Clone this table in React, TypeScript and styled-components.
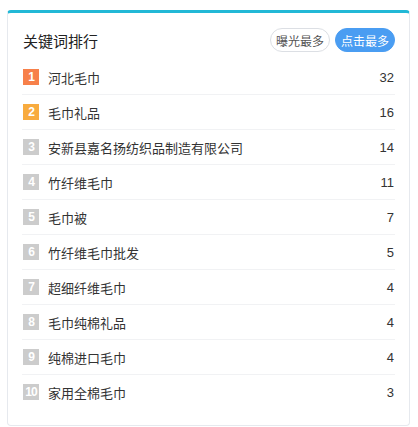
import React, { useState } from "react";
import styled, { createGlobalStyle } from "styled-components";

const Global = createGlobalStyle`
  html, body { margin: 0; padding: 0; background: #fff; }
  body { font-family: "Liberation Sans", Arial, "Noto Sans CJK SC", sans-serif; }
`;

const Page = styled.div`
  padding: 10px 8px 1px 7px;
  width: 418px;
  box-sizing: border-box;
`;

const Card = styled.div`
  border: 1px solid #e6e9ee;
  border-top: 3px solid #22b8d6;
  border-radius: 4px;
  padding: 14px 14px 20px 14px;
  box-sizing: border-box;
  height: 416px;
`;

const Header = styled.div`
  display: flex;
  align-items: center;
  justify-content: space-between;
  height: 26px;
  margin-bottom: 7px;
`;

const Title = styled.div`
  font-size: 15px;
  color: #222;
  padding-left: 1px;
`;

const Tabs = styled.div`
  display: flex;
  gap: 5px;
`;

const Tab = styled.button<{ $active: boolean }>`
  font-family: inherit;
  font-size: 12px;
  height: 24px;
  padding: 0 5px;
  border-radius: 12px;
  border: 1px solid ${(p) => (p.$active ? "#4a9df2" : "#dcdfe4")};
  background: ${(p) => (p.$active ? "#4a9df2" : "#fff")};
  color: ${(p) => (p.$active ? "#fff" : "#555")};
  cursor: pointer;
`;

const List = styled.div`
  display: flex;
  flex-direction: column;
`;

const Row = styled.div`
  display: flex;
  align-items: center;
  height: 35px;
  border-top: 1px solid #f1f2f4;
  box-sizing: border-box;
  &:first-child { border-top: none; height: 34px; }
  font-size: 13px;
  color: #333;
  padding-left: 1px;
`;

const Badge = styled.span<{ $bg: string }>`
  width: 16px;
  height: 16px;
  background: ${(p) => p.$bg};
  color: #fff;
  font-size: 12px;
  font-weight: bold;
  display: flex;
  align-items: center;
  justify-content: center;
  margin-right: 9px;
  letter-spacing: -1px;
`;

const Name = styled.span`
  flex: 1;
`;

const Count = styled.span`
  color: #333;
  padding-right: 1px;
`;

const data: [string, number][] = [
  ["河北毛巾", 32],
  ["毛巾礼品", 16],
  ["安新县嘉名扬纺织品制造有限公司", 14],
  ["竹纤维毛巾", 11],
  ["毛巾被", 7],
  ["竹纤维毛巾批发", 5],
  ["超细纤维毛巾", 4],
  ["毛巾纯棉礼品", 4],
  ["纯棉进口毛巾", 4],
  ["家用全棉毛巾", 3],
];

const badgeColor = (i: number) => (i === 0 ? "#f7804a" : i === 1 ? "#f8ab3e" : "#cccccc");

export default function App() {
  const [tab, setTab] = useState(1);
  return (
    <Page>
      <Global />
      <Card>
        <Header>
          <Title>关键词排行</Title>
          <Tabs>
            <Tab $active={tab === 0} onClick={() => setTab(0)}>曝光最多</Tab>
            <Tab $active={tab === 1} onClick={() => setTab(1)}>点击最多</Tab>
          </Tabs>
        </Header>
        <List>
          {data.map(([name, n], i) => (
            <Row key={name}>
              <Badge $bg={badgeColor(i)}>{i + 1}</Badge>
              <Name>{name}</Name>
              <Count>{n}</Count>
            </Row>
          ))}
        </List>
      </Card>
    </Page>
  );
}
